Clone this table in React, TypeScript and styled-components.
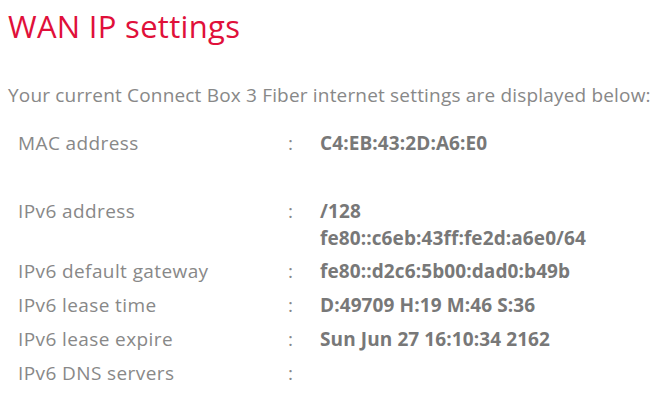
import React from 'react';
import styled, { createGlobalStyle } from 'styled-components';

type Row = {
  label: string;
  values: string[];
  spacer?: boolean;
};

const rows: Row[] = [
  { label: 'MAC address', values: ['C4:EB:43:2D:A6:E0'], spacer: true },
  { label: 'IPv6 address', values: ['/128', 'fe80::c6eb:43ff:fe2d:a6e0/64'] },
  { label: 'IPv6 default gateway', values: ['fe80::d2c6:5b00:dad0:b49b'] },
  { label: 'IPv6 lease time', values: ['D:49709 H:19 M:46 S:36'] },
  { label: 'IPv6 lease expire', values: ['Sun Jun 27 16:10:34 2162'] },
  { label: 'IPv6 DNS servers', values: [] },
];

const GlobalStyle = createGlobalStyle`
  html, body {
    margin: 0;
    background: #ffffff;
  }
  body {
    font-family: 'Open Sans', 'Noto Sans', Arial, sans-serif;
  }
`;

const Page = styled.div`
  padding: 6px 8px 0 8px;
`;

const Title = styled.h1`
  margin: 0;
  font-size: 31px;
  line-height: 40px;
  font-weight: 400;
  color: #e0103a;
  letter-spacing: 0.3px;
`;

const Intro = styled.p`
  margin: 36px 0 0 0;
  font-size: 19px;
  line-height: 26px;
  color: #888888;
  letter-spacing: 0.18px;
  white-space: nowrap;
`;

const Table = styled.div`
  display: grid;
  grid-template-columns: 270px 32px 1fr;
  padding-left: 10px;
  margin-top: 22px;
`;

const Label = styled.div<{ $spacer?: boolean }>`
  font-size: 19px;
  line-height: 27px;
  padding-bottom: ${p => (p.$spacer ? 41 : 7)}px;
  color: #888888;
  letter-spacing: 0.4px;
`;

const Colon = styled(Label)`
  letter-spacing: 0;
`;

const Value = styled.div<{ $spacer?: boolean }>`
  font-size: 19px;
  line-height: 27px;
  padding-bottom: ${p => (p.$spacer ? 41 : 7)}px;
  color: #787878;
  font-weight: 700;
  letter-spacing: 0.1px;

  & > div + div {
    margin-bottom: -1px;
  }
`;

export default function App() {
  return (
    <>
      <GlobalStyle />
      <Page>
        <Title>WAN IP settings</Title>
        <Intro>Your current Connect Box 3 Fiber internet settings are displayed below:</Intro>
        <Table>
          {rows.map(r => (
            <React.Fragment key={r.label}>
              <Label $spacer={r.spacer}>{r.label}</Label>
              <Colon $spacer={r.spacer}>:</Colon>
              <Value $spacer={r.spacer}>
                {r.values.map(v => (
                  <div key={v}>{v}</div>
                ))}
              </Value>
            </React.Fragment>
          ))}
        </Table>
      </Page>
    </>
  );
}
